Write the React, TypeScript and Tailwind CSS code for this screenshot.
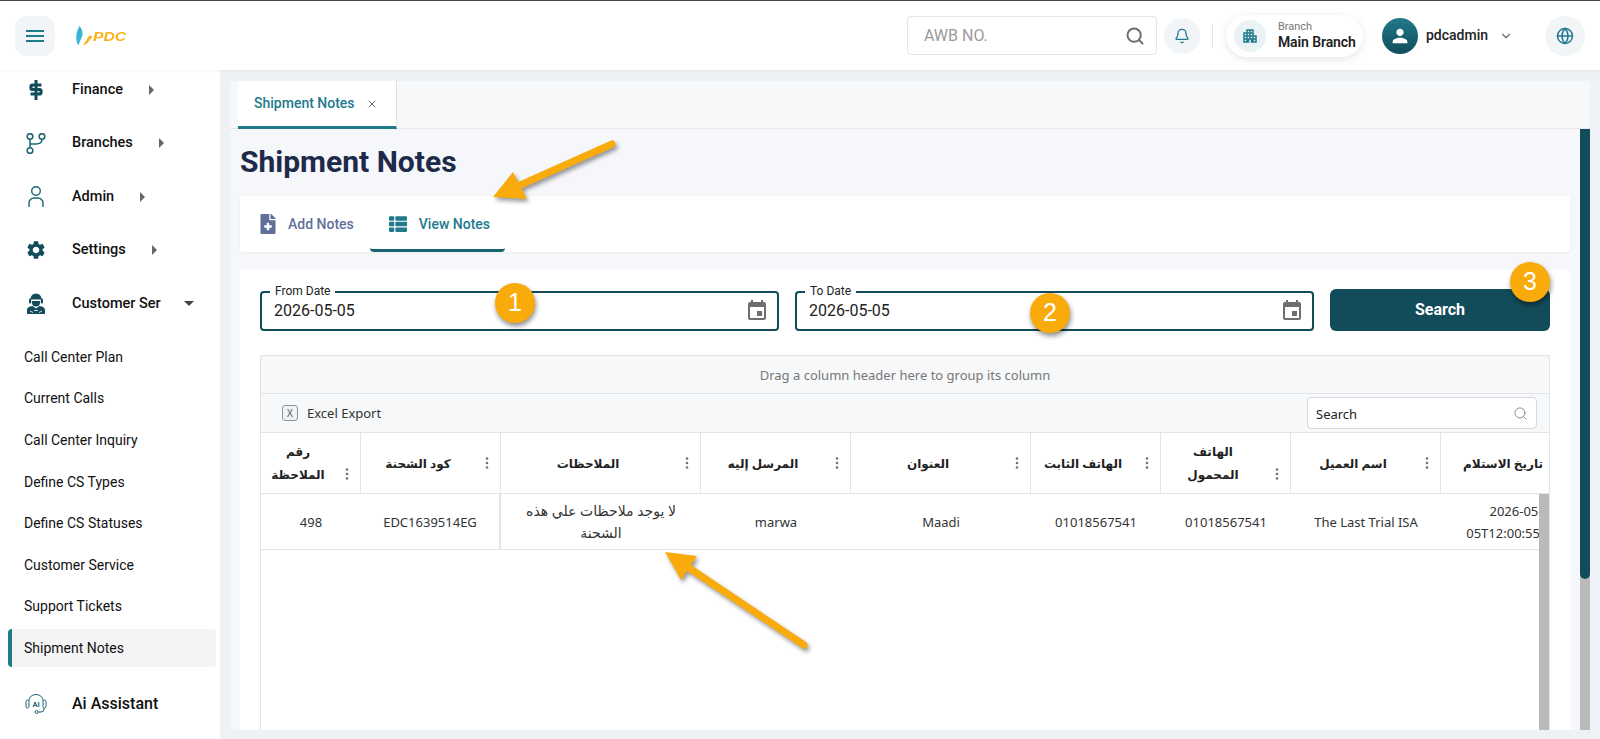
import { Bell, ChevronDown, Globe, Search, X } from "lucide-react";
import { FaFileMedical, FaThList } from "react-icons/fa";
import { MdApartment, MdEvent, MdPerson, MdSettings } from "react-icons/md";

const mainMenu = [
  { label: "Finance", icon: <DollarIcon /> },
  { label: "Branches", icon: <BranchIcon /> },
  { label: "Admin", icon: <UserOutline /> },
  { label: "Settings", icon: <MdSettings size={22} className="text-[#124c5a]" /> },
];

const subMenu = [
  "Call Center Plan",
  "Current Calls",
  "Call Center Inquiry",
  "Define CS Types",
  "Define CS Statuses",
  "Customer Service",
  "Support Tickets",
  "Shipment Notes",
];

const columns = [
  { title: "رقم\nالملاحظة", value: "498", wrap: true, width: "w-[100px]" },
  { title: "كود الشحنة", value: "EDC1639514EG", width: "w-[140px]" },
  { title: "الملاحظات", value: "لا يوجد ملاحظات علي هذه\nالشحنة", arabic: true, width: "w-[200px]" },
  { title: "المرسل إليه", value: "marwa", width: "w-[150px]" },
  { title: "العنوان", value: "Maadi", width: "w-[180px]" },
  { title: "الهاتف الثابت", value: "01018567541", width: "w-[130px]" },
  { title: "الهاتف\nالمحمول", value: "01018567541", wrap: true, width: "w-[130px]" },
  { title: "اسم العميل", value: "The Last Trial ISA", width: "w-[150px]" },
  { title: "تاريخ الاستلام", value: "2026-05-\n05T12:00:55.123", width: "w-[150px]" },
];

function DollarIcon() {
  return (
    <svg width="14" height="20" viewBox="0 0 14 20" fill="none" stroke="#124c5a">
      <path d="M7 0v20" strokeWidth="3" />
      <path d="M12.500 5H3.500a1.500 1.500 0 0 0-1.500 1.500v1.500a1.500 1.500 0 0 0 1.500 1.500h7a1.500 1.500 0 0 1 1.500 1.500v1.500a1.500 1.500 0 0 1-1.500 1.500H1.500" strokeWidth="3.200" />
    </svg>
  );
}

function BranchIcon() {
  return (
    <svg width="20" height="21" viewBox="0 0 20 21" fill="none" stroke="#1c6474" strokeWidth="1.500">
      <circle cx="4" cy="3.500" r="2.800" />
      <circle cx="16" cy="3.500" r="2.800" />
      <circle cx="4" cy="17.500" r="2.800" />
      <path d="M4 6.300v8.400" />
      <path d="M16 6.300c0 3.500-3 4.700-6 4.700H4" />
    </svg>
  );
}

function UserOutline() {
  return (
    <svg width="16" height="21" viewBox="0 0 16 21" fill="none" stroke="#1c6474" strokeWidth="1.400">
      <circle cx="8" cy="5" r="4.300" />
      <path d="M1 21v-4a5 5 0 0 1 5-5h4a5 5 0 0 1 5 5v4" />
    </svg>
  );
}

function AgentIcon() {
  return (
    <svg width="18" height="21" viewBox="0 0 18 21" fill="#124c5a">
      <path d="M3.500 6a5.500 5.500 0 0 1 11 0v.5h-11z" />
      <path d="M5 8h8v1.500a4 4 0 0 1-8 0z" />
      <rect x="2" y="5.500" width="2.200" height="5" rx="1.100" />
      <rect x="13.800" y="5.500" width="2.200" height="5" rx="1.100" />
      <path d="M0 21v-4c0-2.500 2.500-3.500 5.500-4l3.500 2.500 3.500-2.500c3 .5 5.500 1.500 5.500 4v4z" />
      <path d="M3 18l3 1.500M15 18l-3 1.500M7 17.500h4" stroke="#fff" strokeWidth="0.800" fill="none" />
    </svg>
  );
}

function AiIcon() {
  return (
    <svg width="22" height="20" viewBox="0 0 22 20" fill="none" stroke="#1c6474" strokeWidth="1">
      <path d="M4 7V6.500a7 6 0 0 1 14 0V7" />
      <rect x="1" y="6" width="3" height="8" rx="1.500" />
      <rect x="18" y="6" width="3" height="8" rx="1.500" />
      <path d="M19 14v1a3 3 0 0 1-3 3h-3" />
      <circle cx="11.500" cy="18" r="1.500" />
      <text x="11" y="13" textAnchor="middle" fontSize="7.500" fontWeight="700" fontFamily="Roboto" fill="#1c6474" stroke="none">
        AI
      </text>
    </svg>
  );
}

function Kebab() {
  return (
    <svg width="4" height="14" viewBox="0 0 4 14" fill="#6b7280">
      <circle cx="2" cy="2.500" r="1.300" />
      <circle cx="2" cy="7" r="1.300" />
      <circle cx="2" cy="11.500" r="1.300" />
    </svg>
  );
}

function Caret({ open }: { open?: boolean }) {
  if (open) {
    return (
      <svg width="10" height="5" viewBox="0 0 10 5" fill="#444">
        <path d="M0 0h10L5 5z" />
      </svg>
    );
  }
  return (
    <svg width="5" height="10" viewBox="0 0 5 10" fill="#666">
      <path d="M0 0l5 5-5 5z" />
    </svg>
  );
}

function Badge({ n, className }: { n: number; className: string }) {
  return (
    <div
      className={`absolute flex h-10 w-10 items-center justify-center rounded-full bg-[#f9ab0b] font-['Liberation_Sans',sans-serif] text-[25px] text-white shadow-[1px_3px_5px_rgba(0,0,0,0.45)] ${className}`}
    >
      {n}
    </div>
  );
}

function DateField({ label }: { label: string }) {
  return (
    <div className="relative flex h-[40px] flex-1 items-center justify-between rounded border-2 border-[#124c5a] bg-white pl-[12px] pr-[8px] text-[16px] text-[#222]">
      <span className="absolute left-[8px] top-[-9px] bg-white px-[5px] text-[12px] leading-[14px] text-[#222]">{label}</span>
      <span>2026-05-05</span>
      <MdEvent size={24} className="text-[#6e6e6e]" />
    </div>
  );
}

export default function App() {
  return (
    <div className="relative flex h-[739px] w-[1600px] flex-col overflow-hidden bg-[#eef1f6] font-['Roboto',sans-serif]">
      <header className="z-10 flex h-[70px] shrink-0 items-center border-t border-[#444] bg-white pl-[15px] pr-[15px] shadow-[0_1px_3px_rgba(0,0,0,0.06)]">
        <button className="flex h-10 w-10 items-center justify-center rounded-xl bg-[#f1f5f8]">
          <svg width="18" height="12" viewBox="0 0 18 12" stroke="#217a8c" strokeWidth="2">
            <path d="M0 1h18M0 6h18M0 11h18" />
          </svg>
        </button>
        <div className="ml-[21px] flex items-center">
          <svg width="17" height="20" viewBox="0 0 17 20">
            <path d="M3.500 0C7 4 7.500 9 5 13c-1 2-1.800 4-2.500 6.500C-.500 15-1 8 3.500 0z" fill="#3bb4d8" />
            <path d="M7 19.500L13 10h4l-6 7.500z" fill="#fbb017" />
          </svg>
          <span className="mt-[2px] origin-left scale-x-[1.3] font-['Liberation_Sans',sans-serif] text-[12px] font-bold italic leading-none text-[#fbb017]">
            PDC
          </span>
        </div>
        <div className="ml-auto flex h-[39px] w-[250px] items-center justify-between rounded border border-[#e3e5e8] bg-white pl-[16px] pr-[11px] text-[16px] text-[#9a9a9a]">
          <span className="mt-[1px]">AWB NO.</span>
          <Search size={20} strokeWidth={2.4} className="text-[#6e6e6e]" />
        </div>
        <div className="ml-[7px] flex h-9 w-9 items-center justify-center rounded-full bg-[#f1f5f8]">
          <Bell size={16} className="text-[#217a8c]" />
        </div>
        <div className="ml-3 h-6 w-px bg-[#e8e8e8]" />
        <div className="ml-[13px] flex h-[42px] w-[137px] items-center rounded-full bg-white pl-2 shadow-[0_2px_8px_rgba(0,0,0,0.1)]">
          <div className="flex h-8 w-8 items-center justify-center rounded-full bg-[#eaf2f5]">
            <MdApartment size={18} className="text-[#217a8c]" />
          </div>
          <div className="ml-3 flex flex-col">
            <span className="text-[11px] leading-[14px] text-[#777]">Branch</span>
            <span className="text-[14px] font-semibold leading-[17px] tracking-[-0.1px] text-[#222]">Main Branch</span>
          </div>
        </div>
        <div className="ml-[19px] flex h-9 w-9 items-center justify-center rounded-full bg-gradient-to-b from-[#217a8c] to-[#124c5a]">
          <MdPerson size={22} className="text-white" />
        </div>
        <span className="ml-2 text-[14px] font-medium text-[#222]">pdcadmin</span>
        <ChevronDown size={14} className="ml-[11px] text-[#666]" />
        <div className="ml-[32px] flex h-10 w-10 items-center justify-center rounded-full bg-[#f1f5f8]">
          <Globe size={18} className="text-[#217a8c]" />
        </div>
      </header>

      <div className="flex min-h-0 flex-1">
        <aside className="w-[220px] shrink-0 overflow-hidden bg-white">
          <ul className="mt-[-7px]">
            {mainMenu.map((item) => (
              <li key={item.label} className="flex h-[53.5px] items-center">
                <span className="flex w-[72px] justify-center">{item.icon}</span>
                <span className="text-[14.500px] font-medium text-[#111]">{item.label}</span>
                <span className="ml-[26px]">
                  <Caret />
                </span>
              </li>
            ))}
            <li className="flex h-[53.5px] items-center">
              <span className="flex w-[72px] justify-center">
                <AgentIcon />
              </span>
              <span className="text-[14.500px] font-medium text-[#111]">Customer Ser</span>
              <span className="ml-[23px]">
                <Caret open />
              </span>
            </li>
          </ul>
          <ul className="mt-[6px]">
            {subMenu.map((label) => (
              <li key={label} className="flex h-[41.6px] items-center pl-2 pr-1">
                <div
                  className={
                    label === "Shipment Notes"
                      ? "flex h-[38px] w-full items-center rounded border-l-4 border-[#217a8c] bg-[#f4f4f4] pl-3 text-[14px] text-[#111]"
                      : "flex h-[38px] w-full items-center pl-4 text-[14px] text-[#111]"
                  }
                >
                  {label}
                </div>
              </li>
            ))}
          </ul>
          <div className="mt-[23px] flex items-center">
            <span className="flex w-[72px] justify-center">
              <AiIcon />
            </span>
            <span className="text-[16px] font-medium text-[#111]">Ai Assistant</span>
          </div>
        </aside>

        <main className="flex min-w-0 flex-1 flex-col pb-[9px] pl-[10px] pr-[10px] pt-[11px]">
          <div className="flex h-[48px] shrink-0 border-b border-[#e6e8ec] bg-[#f6f8fa] pl-2">
            <div className="flex h-[48px] w-[159px] items-center border-b-[3px] border-r border-b-[#217a8c] border-r-[#dfe2e6] bg-white pl-4 text-[14px] font-medium text-[#217a8c]">
              Shipment Notes
              <X size={12} className="ml-[11px] text-[#666]" />
            </div>
          </div>

          <div className="flex min-h-0 flex-1 bg-[#f5f7fa]">
            <div className="flex min-w-0 flex-1 flex-col px-[10px]">
              <h1 className="h-[67px] shrink-0 pt-[14px] text-[30px] font-bold leading-[38px] text-[#1e2a4a]">Shipment Notes</h1>

              <div className="flex h-14 shrink-0 rounded bg-white pl-[18px] shadow-[0_1px_3px_rgba(0,0,0,0.05)]">
                <div className="flex items-center gap-[10px] pr-[16px] text-[14px] font-medium text-[#5f6f9a]">
                  <FaFileMedical size={20} />
                  Add Notes
                </div>
                <div className="flex items-center gap-[12px] rounded-b border-b-[3px] border-[#1b6474] pl-[19px] pr-[15px] pt-[3px] text-[14px] font-medium text-[#217a8c]">
                  <FaThList size={18} />
                  View Notes
                </div>
              </div>

              <section className="mt-[17px] flex min-h-0 flex-1 flex-col rounded-t bg-white px-[20px] pt-[20px]">
                <div className="flex h-[42px] shrink-0 items-end gap-4">
                  <DateField label="From Date" />
                  <DateField label="To Date" />
                  <button className="h-[42px] w-[220px] rounded-md bg-[#124c5a] text-[16px] font-bold text-white">Search</button>
                </div>

                <div className="mt-[24px] flex min-h-0 flex-1 flex-col overflow-hidden border-x border-t border-[#e1e4e8] font-['Noto_Sans','DejaVu_Sans',sans-serif] text-[13px] text-[#333]">
                  <div className="flex h-[38px] shrink-0 items-center justify-center border-b border-[#e1e4e8] bg-[#f6f8fa] pt-[2px] text-[#777]">
                    Drag a column header here to group its column
                  </div>
                  <div className="flex h-[38px] shrink-0 items-center justify-between bg-[#f6f8fa] pl-[21px] pr-[12px]">
                    <div className="flex items-center gap-[9px]">
                      <span className="flex h-4 w-4 items-center justify-center rounded-[3px] border border-[#8a94a0] bg-[#f0f3f6] text-[10px] leading-none text-[#555]">
                        X
                      </span>
                      <span className="mt-[2px]">Excel Export</span>
                    </div>
                    <div className="flex h-[32px] w-[230px] items-center justify-between rounded border border-[#d5d8dc] bg-white pl-2 pr-2 text-[#222]">
                      <span className="mt-[3px]">Search</span>
                      <Search size={15} strokeWidth={1.3} className="text-[#777]" />
                    </div>
                  </div>

                  <div className="flex h-[62px] shrink-0 overflow-hidden border-y border-[#e1e4e8] bg-white pr-[10px]">
                    {columns.map((col) => (
                      <div key={col.title} className={`relative flex shrink-0 items-center border-r border-[#e1e4e8] pr-[11px] ${col.width}`}>
                        <span dir="rtl" className="flex-1 whitespace-pre-line pl-[4px] pr-[14px] text-center text-[12px] font-bold leading-[23px] text-[#222]">
                          {col.title}
                        </span>
                        <span className={col.wrap ? "mt-[22px]" : ""}>
                          <Kebab />
                        </span>
                      </div>
                    ))}
                  </div>

                  <div className="relative flex min-h-0 flex-1 flex-col">
                    <div className="flex h-[56px] shrink-0 overflow-hidden border-b border-[#e1e4e8] pr-[10px]">
                      {columns.map((col, i) => (
                        <div
                          key={col.title}
                          className={`flex shrink-0 items-center justify-center whitespace-pre-line px-2 pt-[1px] text-center leading-[22px] ${col.width} ${col.arabic ? "text-[14px]" : ""} ${i === 1 ? "border-r-2 border-[#e1e4e8]" : ""}`}
                        >
                          {col.value}
                        </div>
                      ))}
                    </div>
                    <div className="absolute bottom-0 right-0 top-0 w-[10px] bg-[#bababa]" />
                  </div>
                </div>
              </section>
            </div>
            <div className="w-[10px] shrink-0 bg-[#bababa]">
              <div className="h-[450px] rounded-b-full bg-[#124c5a]" />
            </div>
          </div>
        </main>
      </div>

      <Badge n={1} className="left-[495px] top-[283px]" />
      <Badge n={2} className="left-[1030px] top-[293px]" />
      <Badge n={3} className="left-[1510px] top-[262px]" />

      <svg className="absolute inset-0 drop-shadow-[2px_3px_2px_rgba(0,0,0,0.4)]" width="1600" height="739" viewBox="0 0 1600 739" fill="#f9ab0b">
        <path d="M612 144L518 186" stroke="#f9ab0b" strokeWidth="7" strokeLinecap="round" />
        <path d="M493 197L513 172L527 199z" />
        <path d="M804 645L689 568" stroke="#f9ab0b" strokeWidth="7" strokeLinecap="round" />
        <path d="M665 552L681 580L697 556z" />
      </svg>
    </div>
  );
}
